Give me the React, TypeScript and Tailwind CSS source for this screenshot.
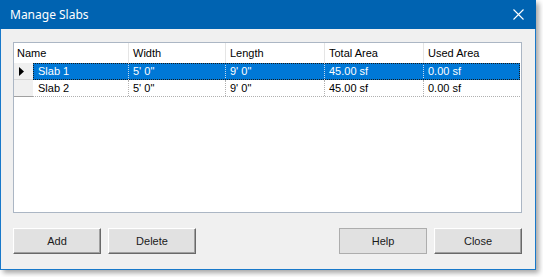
const COLUMNS = [
  { key: "name", label: "Name", w: "w-[96px]" },
  { key: "width", label: "Width", w: "w-[97px]" },
  { key: "length", label: "Length", w: "w-[99px]" },
  { key: "total", label: "Total Area", w: "w-[99px]" },
  { key: "used", label: "Used Area", w: "w-[96px]" },
];

const SLABS = [
  { name: "Slab 1", width: "5' 0\"", length: "9' 0\"", total: "45.00 sf", used: "0.00 sf" },
  { name: "Slab 2", width: "5' 0\"", length: "9' 0\"", total: "45.00 sf", used: "0.00 sf" },
];

const FONT = { fontFamily: '"Liberation Sans", Arial, sans-serif' };

function Button({ label, hover }: { label: string; hover?: boolean }) {
  return (
    <button
      className={
        hover
          ? "w-[88px] h-[26px] bg-[#e1e1e1] border border-[#adadad] text-[11px] text-[#1a1a1a] leading-none"
          : "w-[88px] h-[26px] bg-[#e1e1e1] border border-t-white border-l-white border-r-[#696969] border-b-[#696969] shadow-[inset_-1px_-1px_0_#a0a0a0,inset_1px_1px_0_#e3e3e3] text-[11px] text-[#1a1a1a] leading-none"
      }
      style={FONT}
    >
      {label}
    </button>
  );
}

export default function App() {
  return (
    <div className="w-[543px] h-[277px] bg-white">
      <div className="w-[536px] h-[270px] flex flex-col bg-[#f0f0f0] border border-[#1979ca] shadow-[3px_3px_5px_rgba(0,0,0,0.35)]">
        {/* title bar */}
        <div className="h-[29px] -mx-px -mt-px bg-[#0063b1] flex items-center justify-between pl-[10px] pr-[12px]">
          <span className="text-white text-[12px]" style={{ fontFamily: '"Noto Sans", "Open Sans", sans-serif' }}>
            Manage Slabs
          </span>
          <svg width="11" height="11" viewBox="0 0 11 11" className="text-white">
            <path d="M0.5 0.5 L10.5 10.5 M10.5 0.5 L0.5 10.5" stroke="currentColor" strokeWidth="1.1" />
          </svg>
        </div>

        {/* grid */}
        <div className="ml-[12px] mt-[13px] w-[509px] h-[171px] bg-white border border-[#abb6c4] text-[11px] text-black" style={FONT}>
          <div className="flex h-[20px] items-center">
            <div className="w-[115px] h-full flex items-center pl-[3px] border-r border-[#e5e5e5]">Name</div>
            {COLUMNS.slice(1).map((c, i) => (
              <div
                key={c.key}
                className={`h-full flex items-center pl-[4px] ${i < 3 ? "border-r border-[#e5e5e5]" : ""} ${c.w}`}
              >
                {c.label}
              </div>
            ))}
          </div>

          {SLABS.map((s, r) => {
            const selected = r === 0;
            return (
              <div key={s.name} className="flex h-[17px]">
                <div
                  className={`w-[19px] h-full bg-[#f0f0f0] flex items-center pl-[5px] border-b ${
                    r === SLABS.length - 1 ? "border-[#a0a0a0]" : "border-[#d8d8d8]"
                  }`}
                >
                  {selected && (
                    <svg width="5" height="9" viewBox="0 0 5 9">
                      <path d="M0 0 L5 4.5 L0 9 Z" fill="#000" />
                    </svg>
                  )}
                </div>
                <div
                  className={
                    selected
                      ? "flex h-full bg-[#0078d7] text-white outline-1 outline-dotted outline-[#1a1a1a] -outline-offset-1"
                      : "flex h-full border-b border-dotted border-[#b0b0b0]"
                  }
                >
                  {COLUMNS.map((c, i) => (
                    <div
                      key={c.key}
                      className={`h-full flex items-center pl-[4px] ${c.w} ${
                        i < COLUMNS.length - 1
                          ? selected
                            ? "border-r border-dotted border-[#c0d8f0]"
                            : "border-r border-dotted border-[#b0b0b0]"
                          : ""
                      } ${i === 0 ? "pl-[5px]" : ""}`}
                    >
                      {(s as Record<string, string>)[c.key]}
                    </div>
                  ))}
                </div>
              </div>
            );
          })}
        </div>

        {/* buttons */}
        <div className="flex ml-[12px] mt-[15px] w-[509px]">
          <div className="flex gap-[7px]">
            <Button label="Add" />
            <Button label="Delete" />
          </div>
          <div className="flex gap-[7px] ml-auto">
            <Button label="Help" hover />
            <Button label="Close" />
          </div>
        </div>
      </div>
    </div>
  );
}
